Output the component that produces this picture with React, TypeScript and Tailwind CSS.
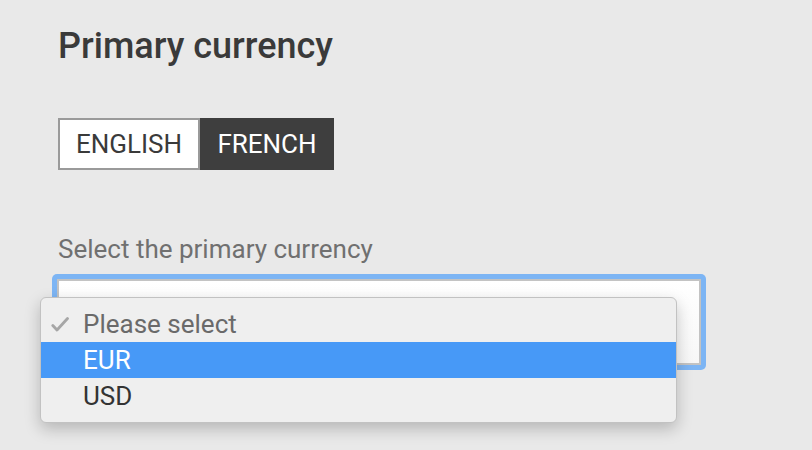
import React from 'react';

const options = [
  { label: 'Please select', checked: true, active: false },
  { label: 'EUR', checked: false, active: true },
  { label: 'USD', checked: false, active: false },
];

export default function App() {
  return (
    <div
      className="w-[812px] h-[450px] overflow-hidden bg-[#e9e9e9] pl-[58px] pt-[26px]"
      style={{ fontFamily: 'Roboto, "Liberation Sans", sans-serif' }}
    >
      <h1 className="text-[36px] leading-[40px] font-medium text-[#3a3a3a]">Primary currency</h1>

      <div className="mt-[52px] flex">
        <button className="h-[52px] w-[142px] border-2 border-[#9a9a9a] bg-white text-[26px] text-[#3a3a3a]">
          ENGLISH
        </button>
        <button className="h-[52px] w-[134px] bg-[#3e3e3e] text-[26px] text-white">FRENCH</button>
      </div>

      <div className="mt-[64px] text-[26px] leading-[30px] text-[#707070]">Select the primary currency</div>

      <div className="relative mt-[10px]">
        {/* focused select */}
        <div className="-ml-[6px] h-[96px] w-[654px] rounded-[5px] bg-[#7db5f4] p-[5px]">
          <div className="h-full w-full border-2 border-[#c3c3c3] bg-gradient-to-b from-white to-[#f7f7f7]" />
        </div>

        {/* open dropdown menu */}
        <div className="absolute left-[-18px] top-[23px] w-[637px] rounded-[6px] border border-[#c2c2c2] bg-[#efefef] py-[8px] shadow-[0_6px_16px_rgba(0,0,0,0.22)]">
          {options.map((o) => (
            <div
              key={o.label}
              className={
                'flex h-[36px] items-center text-[26px] ' +
                (o.active ? 'bg-[#4799f7] text-white' : o.checked ? 'text-[#6a6a6a]' : 'text-[#333333]')
              }
            >
              <span className="flex w-[42px] pl-[10px]">
                {o.checked && (
                  <svg width="18" height="15" viewBox="0 0 18 15">
                    <polyline
                      points="1.8,8.5 6,13 16.5,1.5"
                      fill="none"
                      stroke="#a6a6a6"
                      strokeWidth="2.8"
                      strokeLinecap="round"
                      strokeLinejoin="round"
                    />
                  </svg>
                )}
              </span>
              <span>{o.label}</span>
            </div>
          ))}
        </div>
      </div>
    </div>
  );
}
